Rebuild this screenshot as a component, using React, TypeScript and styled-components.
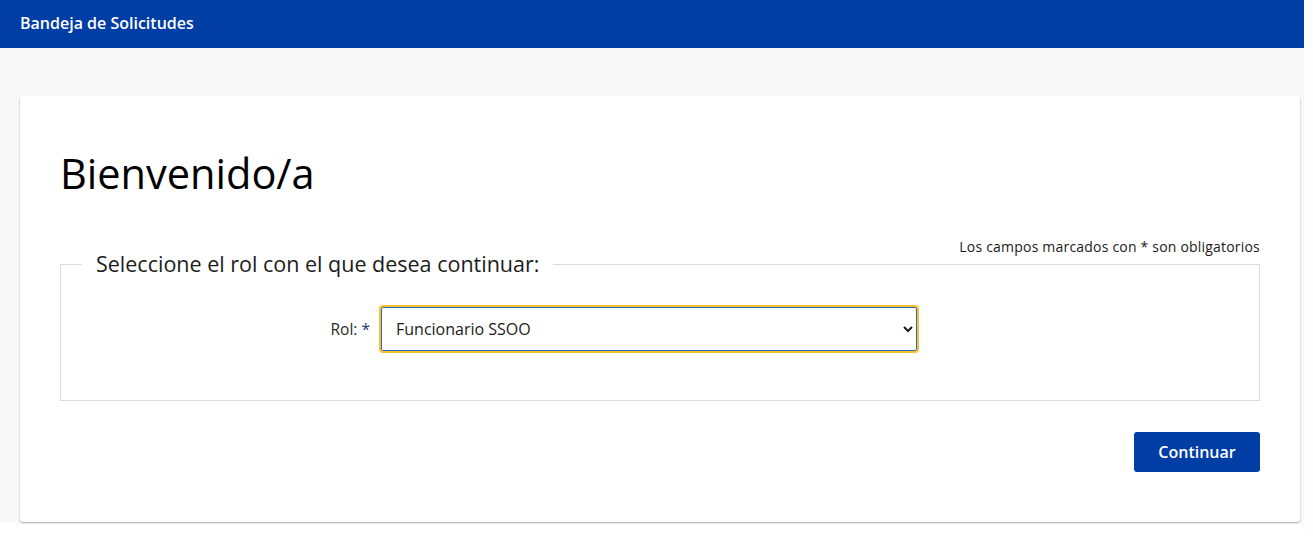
import styled, { createGlobalStyle } from 'styled-components';

const GlobalStyle = createGlobalStyle`
    html, body {
        margin: 0;
        padding: 0;
        background: #fdfdfd;
    }
    body {
        font-family: 'Open Sans', 'Noto Sans', sans-serif;
        color: #1b1b1b;
    }
`;

const Page = styled.div`
    width: calc(100% - 9px);
    min-height: 100vh;
    background: #fff;
`;

const TopBar = styled.header`
    height: 48px;
    background: #003da5;
    display: flex;
    align-items: center;
    padding: 0 20px;
    box-sizing: border-box;
`;

const AppName = styled.span`
    color: #fff;
    font-size: 16px;
    font-weight: 600;
    margin-top: -2px;
`;

const Main = styled.main`
    background: #f8f8f8;
    padding: 48px 4px 0 20px;
`;

const Card = styled.section`
    background: #fff;
    border-radius: 3px;
    box-shadow: 0 1px 2px rgba(0, 0, 0, 0.35);
    padding: 53px 40px 50px;
`;

const Title = styled.h1`
    margin: 0;
    font-size: 41.5px;
    line-height: 48px;
    font-weight: 400;
    color: #000;
`;

const RequiredNote = styled.p`
    margin: 41px 0 0;
    text-align: right;
    font-size: 14px;
    line-height: 18px;
    letter-spacing: 0.2px;
    color: #1b1b1b;
`;

const RoleFieldset = styled.fieldset`
    margin: 0;
    padding: 0 0 49px 21px;
    border: 1px solid #dcdcdc;
    min-width: 0;
`;

const Legend = styled.legend`
    padding: 0 14px;
    font-size: 21.5px;
    line-height: 16px;
    color: #1b1b1b;
`;

const FieldRow = styled.div`
    display: grid;
    grid-template-columns: 288px 536px;
    column-gap: 11px;
    align-items: center;
    margin-top: 35px;
`;

const Label = styled.label`
    text-align: right;
    font-size: 15.5px;
    color: #2b2b2b;
`;

const Star = styled.span`
    color: #23406e;
`;

const Select = styled.select`
    height: 44px;
    box-sizing: border-box;
    border: 1px solid #1f6db8;
    border-radius: 2px;
    outline: 2px solid #ffbe2e;
    outline-offset: 0;
    padding: 0 4px 0 10px;
    font-family: 'Open Sans', 'Noto Sans', sans-serif;
    font-size: 16px;
    color: #1b1b1b;
    background: #fff;
`;

const Actions = styled.div`
    display: flex;
    justify-content: flex-end;
    margin-top: 31px;
`;

const PrimaryButton = styled.button`
    width: 126px;
    height: 40px;
    border: none;
    border-radius: 3px;
    background: #003da5;
    color: #fff;
    font-family: 'Open Sans', 'Noto Sans', sans-serif;
    font-size: 16px;
    font-weight: 600;
    cursor: pointer;
`;

export default function App() {
    return (
        <>
            <GlobalStyle />
            <Page>
                <TopBar>
                    <AppName>Bandeja de Solicitudes</AppName>
                </TopBar>
                <Main>
                    <Card>
                        <Title>Bienvenido/a</Title>
                        <RequiredNote>Los campos marcados con * son obligatorios</RequiredNote>
                        <RoleFieldset>
                            <Legend>Seleccione el rol con el que desea continuar:</Legend>
                            <FieldRow>
                                <Label htmlFor="rol">
                                    Rol: <Star>*</Star>
                                </Label>
                                <Select id="rol" defaultValue="ssoo">
                                    <option value="ssoo">Funcionario SSOO</option>
                                </Select>
                            </FieldRow>
                        </RoleFieldset>
                        <Actions>
                            <PrimaryButton type="button">Continuar</PrimaryButton>
                        </Actions>
                    </Card>
                </Main>
            </Page>
        </>
    );
}
